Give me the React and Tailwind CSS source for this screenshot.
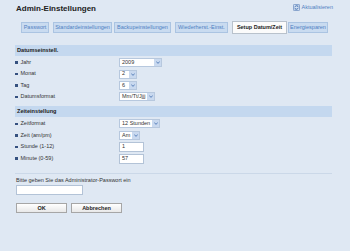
import React from "react";

const font = { fontFamily: '"Liberation Sans", Arial, sans-serif' };

function Arrow() {
  return (
    <div className="flex h-full w-[7px] items-center justify-center bg-[#c9d9ef]">
      <svg width="4" height="3" viewBox="0 0 4 3">
        <path d="M0.3 0.5 L2 2.4 L3.7 0.5" fill="none" stroke="#4f78b5" strokeWidth="0.9" />
      </svg>
    </div>
  );
}

function Select({ value, w }) {
  return (
    <div className={`flex h-[9px] items-center justify-between border border-[#b7c8de] bg-white ${w}`}>
      <span className="pl-[2px] text-[5.5px] leading-none text-[#333]">{value}</span>
      <Arrow />
    </div>
  );
}

function Input({ value, w, h }) {
  return (
    <div className={`flex items-center border border-[#b3c3d7] bg-white ${w} ${h}`}>
      <span className="pl-[2px] text-[5.5px] leading-none text-[#333]">{value}</span>
    </div>
  );
}

function Row({ label, h, children }) {
  return (
    <div className={`flex items-center ${h}`}>
      <div className="flex w-[104px] items-center">
        <span className="mr-[3px] h-[2.5px] w-[2.5px] bg-[#34507f]" />
        <span className="text-[5.5px] leading-none text-[#333]">{label}</span>
      </div>
      {children}
    </div>
  );
}

function SectionHead({ title }) {
  return (
    <div className="flex h-[11px] items-center bg-[#c4d8ef] pl-[2px]">
      <span className="text-[5.6px] font-bold leading-none text-[#222]">{title}</span>
    </div>
  );
}

function Tab({ label, w, active }) {
  if (active) {
    return (
      <div className={`flex h-[13px] items-center justify-center border border-[#b9c2cc] bg-[#fbfbfb] ${w}`}>
        <span className="text-[5.5px] font-bold leading-none text-[#222]">{label}</span>
      </div>
    );
  }
  return (
    <div className={`flex h-[11px] items-center justify-center border border-[#abc4e2] bg-[#c9dbf0] ${w}`}>
      <span className="text-[5.5px] leading-none text-[#4f7fc2]">{label}</span>
    </div>
  );
}

export default function App() {
  return (
    <div className="h-[251px] w-[350px] overflow-hidden bg-[#dfe8f3] pl-[15px] pr-[18px]" style={font}>
      {/* HEADER */}
      <div className="flex items-start justify-between pt-[4px]">
        <h1 className="pl-[1px] text-[8px] font-bold leading-[10px] text-[#222]">Admin-Einstellungen</h1>
        <div className="mr-[-1px] flex items-center pt-[0px]">
          <svg width="7" height="7" viewBox="0 0 7 7" className="mr-[1.5px]">
            <rect x="0.4" y="0.4" width="6.2" height="6.2" rx="1" fill="#d6e3f3" stroke="#5a80b8" strokeWidth="0.7" />
            <path d="M1.8 3.3 A1.8 1.8 0 0 1 5 2.4" fill="none" stroke="#2f5fa6" strokeWidth="0.8" />
            <path d="M5.2 3.7 A1.8 1.8 0 0 1 2 4.6" fill="none" stroke="#2f5fa6" strokeWidth="0.8" />
            <path d="M5.4 1.4 L5.3 2.7 L4.1 2.5 Z" fill="#2f5fa6" />
            <path d="M1.6 5.6 L1.7 4.3 L2.9 4.5 Z" fill="#2f5fa6" />
          </svg>
          <span className="text-[5.5px] leading-none text-[#4f7fc2]">Aktualisieren</span>
        </div>
      </div>

      {/* TABS */}
      <div className="mt-[7px] flex items-center pl-[6px]">
        <Tab label="Passwort" w="w-[28px]" />
        <div className="ml-[4px]"><Tab label="Standardeinstellungen" w="w-[59px]" /></div>
        <div className="ml-[2px]"><Tab label="Backupeinstellungen" w="w-[57px]" /></div>
        <div className="ml-[4px]"><Tab label="Wiederherst.-Einst." w="w-[53px]" /></div>
        <div className="ml-[4px]"><Tab label="Setup Datum/Zeit" w="w-[55px]" active /></div>
        <div className="ml-[1px]"><Tab label="Energiesparen" w="w-[40px]" /></div>
      </div>

      {/* DATUM */}
      <div className="mt-[11px]">
        <SectionHead title="Datumseinstell." />
        <div className="pt-[1px]">
          <Row label="Jahr" h="h-[11.4px]"><Select value="2009" w="w-[43px]" /></Row>
          <Row label="Monat" h="h-[11.4px]"><Select value="2" w="w-[18px]" /></Row>
          <Row label="Tag" h="h-[11.4px]"><Select value="6" w="w-[18px]" /></Row>
          <Row label="Datumsformat" h="h-[11.4px]"><Select value="Mm/Tt/Jjjj" w="w-[36px]" /></Row>
        </div>
      </div>

      {/* ZEIT */}
      <div className="mt-[3.4px]">
        <SectionHead title="Zeiteinstellung" />
        <div className="pt-[1px]">
          <Row label="Zeitformat" h="h-[11.6px]"><Select value="12 Stunden" w="w-[41px]" /></Row>
          <Row label="Zeit (am/pm)" h="h-[11.6px]"><Select value="Am" w="w-[21px]" /></Row>
          <Row label="Stunde (1-12)" h="h-[11.6px]"><Input value="1" w="w-[25px]" h="h-[10px]" /></Row>
          <Row label="Minute (0-59)" h="h-[11.6px]"><Input value="57" w="w-[25px]" h="h-[10px]" /></Row>
        </div>
      </div>

      <div className="mt-[9px] h-px bg-[#cbd8e8]" />

      {/* PASSWORT */}
      <div className="pl-[1px]">
        <p className="mt-[3px] text-[5.5px] leading-[7px] text-[#333]">Bitte geben Sie das Administrator-Passwort ein</p>
        <div className="mt-[1px]"><Input value="" w="w-[67px]" h="h-[10px]" /></div>
        <div className="mt-[8px] flex gap-[4px]">
          <button className="flex h-[10px] w-[51px] items-center justify-center border border-[#a6a6a6] bg-gradient-to-b from-white to-[#e8e8e8] text-[5.5px] font-bold leading-none text-[#222]">OK</button>
          <button className="flex h-[10px] w-[51px] items-center justify-center border border-[#a6a6a6] bg-gradient-to-b from-white to-[#e8e8e8] text-[5.5px] font-bold leading-none text-[#222]">Abbrechen</button>
        </div>
      </div>
    </div>
  );
}
